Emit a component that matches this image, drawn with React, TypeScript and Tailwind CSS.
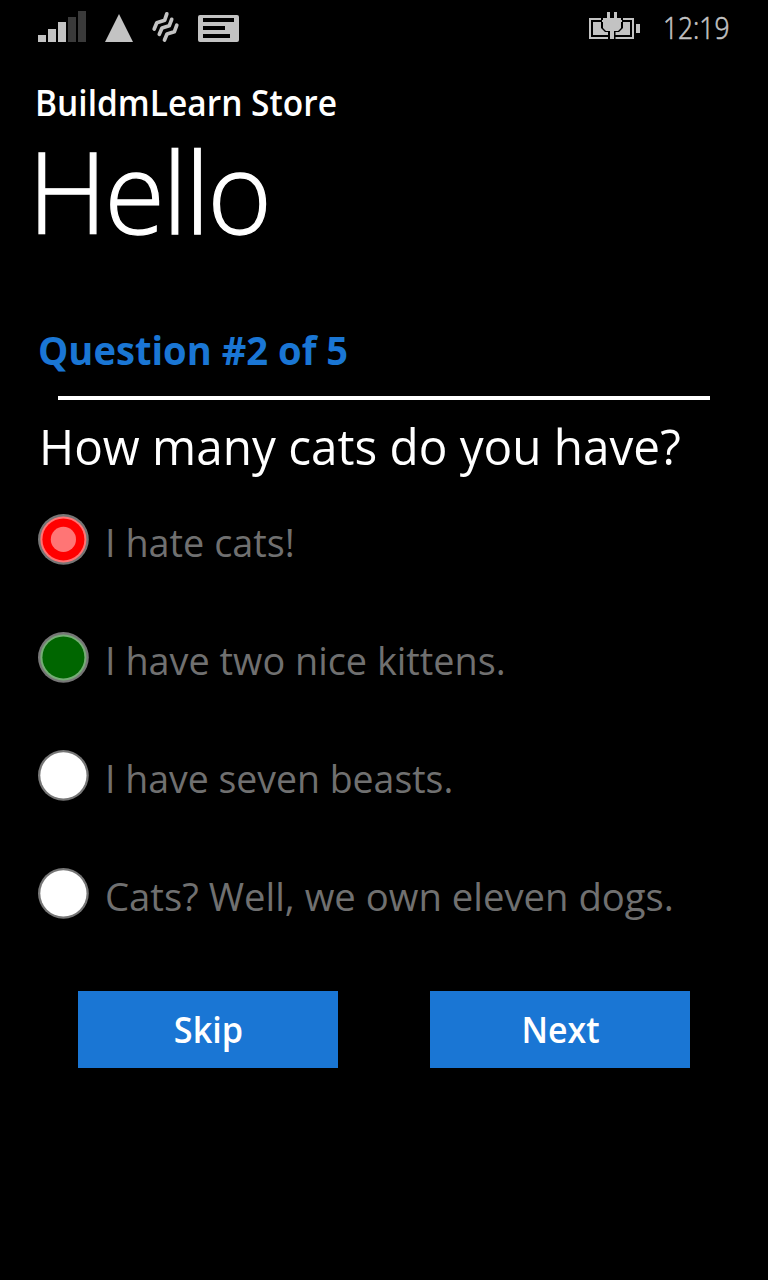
type Tone = "wrong" | "right" | "plain";

const answers: { text: string; tone: Tone; label: string }[] = [
  { text: "I hate cats!", tone: "wrong", label: "scale-x-[0.97]" },
  { text: "I have two nice kittens.", tone: "right", label: "scale-x-[0.97]" },
  { text: "I have seven beasts.", tone: "plain", label: "scale-x-[0.96]" },
  { text: "Cats? Well, we own eleven dogs.", tone: "plain", label: "scale-x-[0.981]" },
];

function Radio({ tone }: { tone: Tone }) {
  return (
    <svg className="h-[52px] w-[51px] shrink-0" viewBox="0 0 51 52">
      <circle cx="25.4" cy="25.4" r="25.4" fill="#767676" />
      {tone === "plain" && <circle cx="25.4" cy="25.4" r="23.1" fill="#fff" />}
      {tone === "wrong" && (
        <>
          <circle cx="25.4" cy="25.4" r="23" fill="#ff7575" />
          <circle cx="25.4" cy="25.4" r="21" fill="#f00" />
          <circle cx="25.4" cy="25.4" r="12.6" fill="#ff7575" />
        </>
      )}
      {tone === "right" && (
        <>
          <circle cx="25.4" cy="25.4" r="23" fill="#75ad75" />
          <circle cx="25.4" cy="25.4" r="21" fill="#060" />
        </>
      )}
    </svg>
  );
}

function StatusBar() {
  return (
    <div className="flex h-[56px] items-start justify-between text-[#c3c3c3]">
      <svg className="h-[56px] w-[260px]" viewBox="0 0 260 56" fill="currentColor">
        <path d="M38 35h8v7h-8zM48 29h8v13h-8zM58 22h8v20h-8z" />
        <path fill="#3a3a3a" d="M68 17h8v25h-8zM78 11h8v31h-8z" />
        <path d="M119 14 133 42H105z" />
        <g fill="none" stroke="currentColor" strokeWidth="3.7" strokeLinecap="round" strokeLinejoin="round">
          <path d="M166.8 13.8 164.7 20.2 156.8 22.8 154.2 29" />
          <path d="M171.7 19.3 169.2 25.8 162 28 159.3 34.3" />
          <path d="M176.8 25.2 174.3 31.8 167 34 164.5 40" />
        </g>
        <path fillRule="evenodd" d="M200 15h37a2 2 0 0 1 2 2v23a2 2 0 0 1-2 2h-37a2 2 0 0 1-2-2V17a2 2 0 0 1 2-2zM203 18v4h31v-4zM203 26v4h22v-4zM203 34v4h27v-4z" />
      </svg>
      <div className="flex">
        <svg className="h-[56px] w-[56px]" viewBox="584 0 56 56" fill="currentColor">
          <path fillRule="evenodd" d="M589 18h45v21h-45zM591 20v17h41V20z" />
          <path d="M593 22h37v13h-37zM636 24h4v9h-4z" />
          <path fill="#000" d="M601 17h22v11l-4 4h-3.500v8h-7.500v-8h-3l-4-4z" />
          <path d="M607 12h3v6h4v-6h3v6h4v2h1v2h-1v6l-3 3h-4v8h-4v-8h-4l-3-3v-6h-1v-2h1v-2h4z" />
        </svg>
        <div className="mr-[40px] ml-[22.5px] w-[65.5px] pt-[6.5px]">
          <span className="block origin-left scale-x-[0.85] text-[31px] leading-[40px] font-light [-webkit-text-stroke:0.6px_#c3c3c3]">12:19</span>
        </div>
      </div>
    </div>
  );
}

export default function App() {
  return (
    <main className="flex h-[1280px] w-[768px] flex-col overflow-hidden bg-black font-['Open_Sans',sans-serif] whitespace-nowrap text-white">
      <StatusBar />
      <header className="pt-[27px]">
        <h2 className="ml-[35px] origin-left scale-x-[0.93] text-[36px] leading-[40px] font-semibold">BuildmLearn Store</h2>
        <h1 className="mt-[18px] ml-[27.5px] origin-left scale-x-[0.98] text-[112px] leading-[100px] font-light tracking-[-2.4px] [-webkit-text-stroke:1.3px_white]">Hello</h1>
      </header>
      <section className="pt-[85px]">
        <h3 className="ml-[38px] origin-left scale-x-[0.978] text-[39px] leading-[48px] font-bold text-[#1a76d4]">Question #2 of 5</h3>
        <div className="mt-[22px] ml-[58px] h-[4px] w-[652px] bg-white" />
        <p className="mt-[16px] ml-[38.5px] origin-left scale-x-[0.953] text-[50px] leading-[60px]">How many cats do you have?</p>
        <ul className="mt-[38px] ml-[38px]">
          {answers.map((a) => (
            <li key={a.text} className="flex h-[118px] items-start gap-[16px]">
              <Radio tone={a.tone} />
              <span className={`origin-left pt-[2px] text-[39px] leading-[51px] text-[#707070] ${a.label}`}>{a.text}</span>
            </li>
          ))}
        </ul>
      </section>
      <footer className="mt-[5px] flex gap-[92px] pl-[78px] text-[36px] font-semibold">
        <button className="flex h-[77px] w-[260px] items-center justify-center bg-[#1a76d4]">
          <span className="scale-x-[0.95]">Skip</span>
        </button>
        <button className="flex h-[77px] w-[260px] items-center justify-center bg-[#1a76d4] pl-[2px]">
          <span className="scale-x-[0.94]">Next</span>
        </button>
      </footer>
    </main>
  );
}
